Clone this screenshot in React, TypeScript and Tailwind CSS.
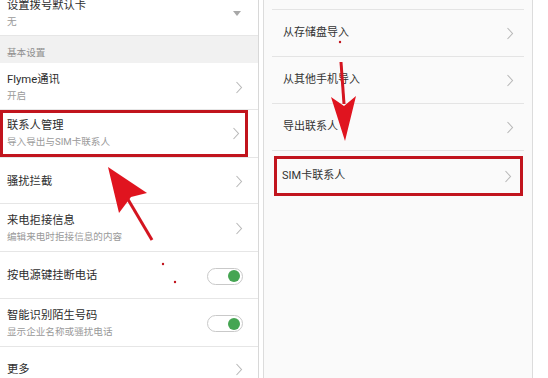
import React from 'react';

const font = "font-['Roboto','Noto_Sans_CJK_SC',sans-serif]";

function Chevron() {
  return (
    <svg width="8" height="13" viewBox="0 0 8 13" className="shrink-0">
      <path d="M1.5 1l5 5.5-5 5.5" fill="none" stroke="#b9b9b9" strokeWidth="1.1" />
    </svg>
  );
}

function Toggle() {
  return (
    <div className="flex h-[17px] w-[36px] items-center justify-end rounded-full border border-[#c9c9c9] bg-white pr-[2px]">
      <div className="h-[12px] w-[12px] rounded-full bg-[#45a552]" />
    </div>
  );
}

type RowProps = {
  title: string;
  sub?: string;
  right?: React.ReactNode;
  h: string;
  boxed?: boolean;
};

function LeftRow({ title, sub, right, h, boxed }: RowProps) {
  return (
    <div className={`${h} flex items-center border-b border-[#e6e6e6] ${boxed ? 'pr-[10px]' : ''}`}>
      <div
        className={`flex h-full flex-1 items-center ${
          boxed ? 'border-[3px] border-[#c1141d] pl-[4px] pr-[5px]' : 'pl-[7px] pr-[15px] pt-[2px]'
        }`}
      >
        <div className="flex flex-1 flex-col justify-center">
          <div className="text-[11.3px] leading-[16px] text-[#2d2d2d]">{title}</div>
          {sub && <div className="text-[9.6px] leading-[15px] text-[#9a9a9a]">{sub}</div>}
        </div>
        {right ?? <Chevron />}
      </div>
    </div>
  );
}

function RightRow({ title }: { title: string }) {
  return (
    <div className="mx-[8px] flex h-[47px] items-center border-b border-[#e4e4e4] pl-[11px] pr-[10px] pt-[1px]">
      <div className="flex-1 text-[11px] text-[#333]">{title}</div>
      <Chevron />
    </div>
  );
}

export default function App() {
  return (
    <div className={`relative flex h-[378px] w-[548px] overflow-hidden bg-white ${font}`}>
      {/* left screen */}
      <div className="w-[259px] shrink-0 border-r border-[#d8d8d8] bg-white">
        <div className="-mt-[8px] flex h-[44px] items-center border-b border-[#e6e6e6] pl-[7px] pr-[17px]">
          <div className="flex flex-1 flex-col">
            <div className="text-[11.3px] leading-[16px] text-[#2d2d2d]">设置拨号默认卡</div>
            <div className="text-[9.6px] leading-[15px] text-[#9a9a9a]">无</div>
          </div>
          <svg width="8" height="5" viewBox="0 0 8 5">
            <path d="M0 0h8L4 5z" fill="#a8a8a8" />
          </svg>
        </div>
        <div className="flex h-[27px] items-end bg-[#f1f1f1] pb-[3px] pl-[7px] text-[9.6px] text-[#8f8f8f]">
          基本设置
        </div>
        <LeftRow h="h-[47px]" title="Flyme通讯" sub="开启" />
        <LeftRow h="h-[48px]" title="联系人管理" sub="导入导出与SIM卡联系人" boxed />
        <LeftRow h="h-[46px]" title="骚扰拦截" />
        <LeftRow h="h-[48px]" title="来电拒接信息" sub="编辑来电时拒接信息的内容" />
        <LeftRow h="h-[47px]" title="按电源键挂断电话" right={<Toggle />} />
        <LeftRow h="h-[48px]" title="智能识别陌生号码" sub="显示企业名称或骚扰电话" right={<Toggle />} />
        <LeftRow h="h-[44px]" title="更多" />
      </div>

      {/* right screen */}
      <div className="ml-[4px] flex w-[270px] shrink-0 flex-col border-x border-[#dcdcdc] bg-[#fafafa]">
        <div className="mx-[8px] h-[10px] border-b border-[#e4e4e4]" />
        <RightRow title="从存储盘导入" />
        <RightRow title="从其他手机导入" />
        <RightRow title="导出联系人" />
        <div className="ml-[10px] mr-[9px] mt-[5px] flex h-[40px] items-center border-[3px] border-[#c1141d] pl-[5px] pr-[8px]">
          <div className="flex-1 text-[11px] text-[#333]">SIM卡联系人</div>
          <Chevron />
        </div>
      </div>

      {/* arrows */}
      <svg className="pointer-events-none absolute left-0 top-0" width="548" height="378">
        <line x1="152" y1="240" x2="126" y2="196" stroke="#d41520" strokeWidth="3" />
        <path d="M108 167L147 193L131 197L119 213Z" fill="#e0141f" />
        <line x1="341" y1="62" x2="344" y2="104" stroke="#d41520" strokeWidth="3" />
        <path d="M345 141L331 97L344 106L356 96Z" fill="#e0141f" />
        <circle cx="163" cy="264" r="1.2" fill="#c1141d" />
        <circle cx="175" cy="282" r="1.2" fill="#c1141d" />
        <circle cx="340" cy="42" r="1.2" fill="#c1141d" />
      </svg>
    </div>
  );
}
